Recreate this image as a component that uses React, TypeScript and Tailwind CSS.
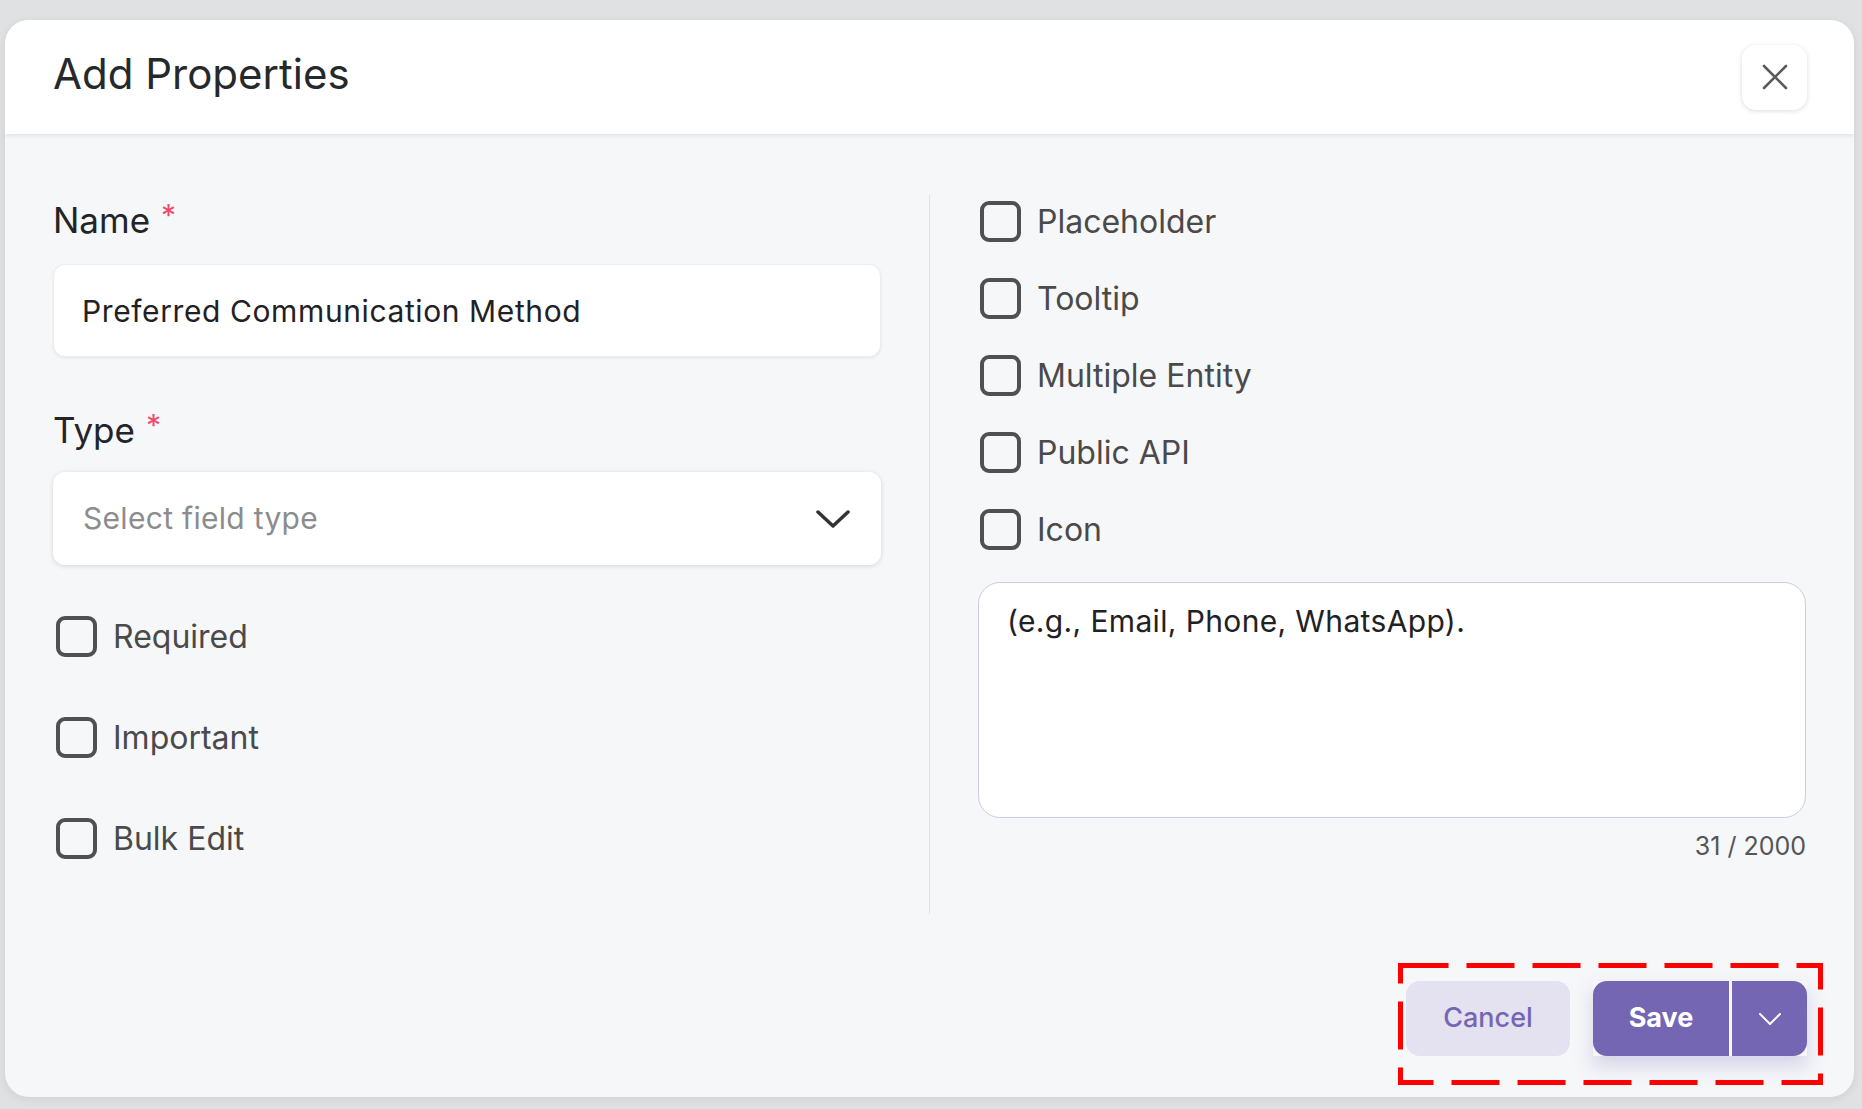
import { useState } from "react";

const FONT = { fontFamily: "Inter, Lato, sans-serif" };

function Checkbox({ label }: { label: string }) {
  const [on, setOn] = useState(false);
  return (
    <label className="flex h-[41px] cursor-pointer items-center gap-[16px]" onClick={() => setOn(!on)}>
      <span
        className={`h-[41px] w-[41px] shrink-0 rounded-[9px] border-[4px] border-[#505050] ${on ? "bg-[#7566b4]" : ""}`}
      />
      <span className="pt-[2px] text-[32px] leading-[1.2] text-[#4a4a4a]">{label}</span>
    </label>
  );
}

function FieldLabel({ text }: { text: string }) {
  return (
    <div className="flex items-start text-[35px] leading-[1.2] text-[#222427]">
      <span>{text}</span>
      <span className="ml-[11px] text-[30px] leading-[1.1] text-[#ee4b6a]">*</span>
    </div>
  );
}

export default function App() {
  const [name, setName] = useState("Preferred Communication Method");
  const [desc, setDesc] = useState("(e.g., Email, Phone, WhatsApp).");

  return (
    <div className="h-[1109px] w-[1862px] overflow-hidden bg-[#e0e1e3] pl-[5px] pt-[20px]" style={FONT}>
      <div className="flex h-[1077px] w-[1849px] flex-col overflow-hidden rounded-[24px] bg-[#f6f7f9] shadow-[0_2px_10px_rgba(0,0,0,0.08)]">
        {/* header */}
        <div className="relative z-10 flex h-[114px] shrink-0 items-center justify-between bg-white pl-[48px] pr-[47px] shadow-[0_2px_4px_rgba(0,0,0,0.08)]">
          <h1 className="pb-[6px] text-[42px] font-normal leading-[1.2] text-[#26292c]">Add Properties</h1>
          <button className="flex h-[65px] w-[65px] items-center justify-center rounded-[14px] bg-white shadow-[0_1px_5px_rgba(0,0,0,0.14)]">
            <svg width="26" height="26" viewBox="0 0 26 26" fill="none" stroke="#5a5a5a" strokeWidth="2.6" strokeLinecap="round">
              <path d="M2 2 L24 24 M24 2 L2 24" />
            </svg>
          </button>
        </div>

        {/* body */}
        <div className="flex px-[48px] pt-[61px]">
          <div className="flex w-[828px] flex-col">
            <div className="mt-[4px] h-[42px]">
              <FieldLabel text="Name" />
            </div>
            <input
              value={name}
              onChange={(e) => setName(e.target.value)}
              className="mt-[23px] h-[93px] w-full rounded-[12px] border border-[#ededed] bg-white px-[28px] text-[30px] tracking-[0.02em] text-[#1f2124] shadow-[0_1px_3px_rgba(0,0,0,0.08)] outline-none"
            />
            <div className="mt-[52px] h-[42px]">
              <FieldLabel text="Type" />
            </div>
            <button className="mt-[21px] flex h-[93px] w-[828px] items-center justify-between rounded-[12px] bg-white pl-[30px] pr-[31px] shadow-[0_1px_5px_rgba(0,0,0,0.14)]">
              <span className="text-[30px] tracking-[0.01em] text-[#8c8c8c]">Select field type</span>
              <svg width="34" height="18" viewBox="0 0 34 18" fill="none" stroke="#333" strokeWidth="3.5" strokeLinecap="round" strokeLinejoin="round">
                <polyline points="2,2 17,16 32,2" />
              </svg>
            </button>
            <div className="ml-[3px] mt-[51px] flex flex-col gap-[60px]">
              <Checkbox label="Required" />
              <Checkbox label="Important" />
              <Checkbox label="Bulk Edit" />
            </div>
          </div>

          <div className="mx-[48px] h-[719px] w-px bg-[#e2e3e7]" />

          <div className="flex flex-1 flex-col">
            <div className="ml-[2px] mt-[6px] flex flex-col gap-[36px]">
              <Checkbox label="Placeholder" />
              <Checkbox label="Tooltip" />
              <Checkbox label="Multiple Entity" />
              <Checkbox label="Public API" />
              <Checkbox label="Icon" />
            </div>
            <textarea
              value={desc}
              onChange={(e) => setDesc(e.target.value)}
              className="mt-[32px] h-[236px] w-full resize-none rounded-[22px] border-[1.5px] border-[#cdc9e8] bg-white px-[28px] pt-[20px] text-[30px] leading-[1.2] tracking-[0.012em] text-[#1f2124] outline-none"
            />
            <div className="mt-[13px] text-right text-[25px] leading-[1.2] text-[#555]">{desc.length} / 2000</div>
          </div>
        </div>

        {/* footer */}
        <div className="flex justify-end pr-[47px] pt-[67px]">
          <div className="relative flex items-center gap-[23px]">
            <button className="h-[75px] w-[164px] rounded-[14px] bg-[#e4e1f1] text-[27px] font-medium text-[#7566b4]">
              Cancel
            </button>
            <div className="flex gap-[3px] shadow-[0_10px_18px_rgba(117,102,180,0.25)]">
              <button className="h-[75px] w-[136px] rounded-l-[14px] bg-[#7566b4] text-[27px] font-bold text-white">Save</button>
              <button className="flex h-[75px] w-[75px] items-center justify-center rounded-r-[14px] bg-[#7566b4]">
                <svg width="22" height="12" viewBox="0 0 22 12" fill="none" stroke="#fff" strokeWidth="2" strokeLinecap="round" strokeLinejoin="round">
                  <polyline points="1,1 11,11 21,1" />
                </svg>
              </button>
            </div>
            {/* annotation outline */}
            <svg className="pointer-events-none absolute -bottom-[29px] -left-[8px] -right-[16px] -top-[18px] h-[122px] w-[425px]" viewBox="0 0 425 122" fill="none">
              <rect x="2.5" y="2.5" width="420" height="117" stroke="#ff0000" strokeWidth="5" strokeDasharray="48 18" />
            </svg>
          </div>
        </div>
      </div>
    </div>
  );
}
